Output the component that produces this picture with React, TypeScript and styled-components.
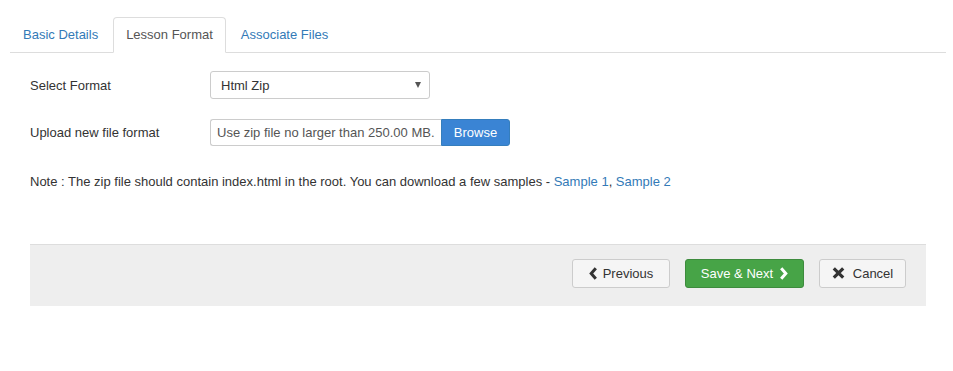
import React from "react";
import styled, { createGlobalStyle } from "styled-components";

const GlobalStyle = createGlobalStyle`
  body {
    margin: 0;
    background: #fff;
    font-family: "Liberation Sans", Arial, sans-serif;
    font-size: 13px;
    color: #333;
  }
`;

const Page = styled.div`
  padding: 17px 7px 0 10px;
`;

const Tabs = styled.ul`
  display: flex;
  list-style: none;
  margin: 0;
  padding: 0;
  border-bottom: 1px solid #ddd;
`;

const Tab = styled.li<{ $active?: boolean }>`
  margin-right: 2px;
  margin-bottom: -1px;
  padding: 9px 12px;
  line-height: 16px;
  border: 1px solid ${(p) => (p.$active ? "#ddd" : "transparent")};
  border-bottom-color: ${(p) => (p.$active ? "#fff" : "transparent")};
  border-radius: 4px 4px 0 0;
  background: ${(p) => (p.$active ? "#fff" : "transparent")};
  color: ${(p) => (p.$active ? "#555" : "#337ab7")};
`;

const Content = styled.div`
  padding: 18px 20px 0 20px;
`;

const FormRow = styled.div`
  display: flex;
  align-items: center;
  margin-bottom: 20px;
`;

const Label = styled.label`
  width: 180px;
  flex: none;
`;

const SelectBox = styled.div`
  width: 220px;
  height: 28px;
  box-sizing: border-box;
  border: 1px solid #ccc;
  border-radius: 3px;
  display: flex;
  align-items: center;
  justify-content: space-between;
  padding: 0 8px 0 10px;
  color: #333;
`;

const Caret = styled.span`
  width: 0;
  height: 0;
  border-left: 3px solid transparent;
  border-right: 3px solid transparent;
  border-top: 6px solid #555;
`;

const FileGroup = styled.div`
  display: flex;
  height: 27px;
`;

const FileField = styled.div`
  width: 231px;
  box-sizing: border-box;
  border: 1px solid #ccc;
  border-right: none;
  border-radius: 3px 0 0 3px;
  display: flex;
  align-items: center;
  padding-left: 6px;
  color: #555;
`;

const BrowseButton = styled.div`
  width: 69px;
  box-sizing: border-box;
  background: #3a84d4;
  border: 1px solid #357ebd;
  border-radius: 0 3px 3px 0;
  color: #fff;
  display: flex;
  align-items: center;
  justify-content: center;
`;

const Note = styled.p`
  margin: 27px 0 0;
  line-height: 18px;
`;

const Link = styled.a`
  color: #337ab7;
  text-decoration: none;
`;

const Footer = styled.div`
  margin-top: 53px;
  height: 62px;
  box-sizing: border-box;
  background: #eee;
  border-top: 1px solid #ddd;
  display: flex;
  justify-content: flex-end;
  align-items: flex-start;
  gap: 15px;
  padding: 14px 20px 0 0;
`;

const Button = styled.button<{ $primary?: boolean; $w: number; $gap: number }>`
  width: ${(p) => p.$w}px;
  height: 29px;
  box-sizing: border-box;
  display: flex;
  align-items: center;
  justify-content: center;
  gap: ${(p) => p.$gap}px;
  padding: 0 0 1px;
  font-family: inherit;
  font-size: 13px;
  border-radius: 3px;
  border: 1px solid ${(p) => (p.$primary ? "#3d8b3d" : "#ccc")};
  background: ${(p) => (p.$primary ? "#47a447" : "#f5f5f5")};
  color: ${(p) => (p.$primary ? "#fff" : "#333")};
`;

const ChevronLeft = () => (
  <svg width="8" height="13" viewBox="0 0 8 13">
    <path d="M6.8 1.2 L2.2 6.5 L6.8 11.8" fill="none" stroke="currentColor" strokeWidth="3" />
  </svg>
);

const ChevronRight = () => (
  <svg width="8" height="13" viewBox="0 0 8 13">
    <path d="M1.2 1.2 L5.8 6.5 L1.2 11.8" fill="none" stroke="currentColor" strokeWidth="3" />
  </svg>
);

const Times = () => (
  <svg width="13" height="12" viewBox="0 0 13 12">
    <path d="M1.8 1.3 L11.2 10.7 M11.2 1.3 L1.8 10.7" fill="none" stroke="currentColor" strokeWidth="3.2" />
  </svg>
);

export default function App() {
  return (
    <Page>
      <GlobalStyle />
      <Tabs>
        <Tab>Basic Details</Tab>
        <Tab $active>Lesson Format</Tab>
        <Tab>Associate Files</Tab>
      </Tabs>
      <Content>
        <FormRow>
          <Label>Select Format</Label>
          <SelectBox>
            <span>Html Zip</span>
            <Caret />
          </SelectBox>
        </FormRow>
        <FormRow>
          <Label>Upload new file format</Label>
          <FileGroup>
            <FileField>Use zip file no larger than 250.00 MB.</FileField>
            <BrowseButton>Browse</BrowseButton>
          </FileGroup>
        </FormRow>
        <Note>
          Note : The zip file should contain index.html in the root. You can download a few samples -{" "}
          <Link href="#">Sample 1</Link>, <Link href="#">Sample 2</Link>
        </Note>
        <Footer>
          <Button $w={98} $gap={6}>
            <ChevronLeft /> Previous
          </Button>
          <Button $primary $w={119} $gap={7}>
            Save &amp; Next <ChevronRight />
          </Button>
          <Button $w={87} $gap={8}>
            <Times /> Cancel
          </Button>
        </Footer>
      </Content>
    </Page>
  );
}
